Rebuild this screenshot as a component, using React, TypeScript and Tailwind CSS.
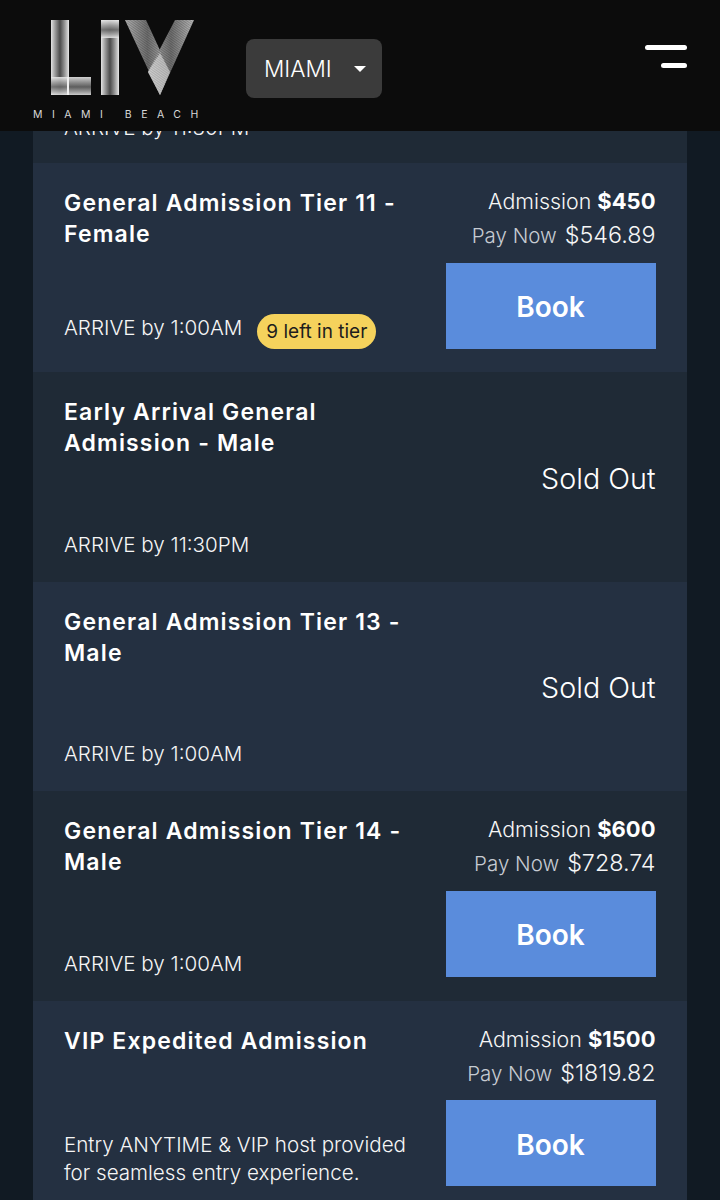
import { ReactNode } from 'react'

const font = { fontFamily: 'Inter, "Open Sans", sans-serif' }

function Logo() {
  return (
    <svg width="167" height="76" viewBox="0 0 167 76" className="block">
      <defs>
        <linearGradient id="bar" x1="0" x2="1" y1="0" y2="0">
          <stop offset="0" stopColor="#e4e4e4" />
          <stop offset="0.12" stopColor="#bdbdbd" />
          <stop offset="0.28" stopColor="#8c8c8c" />
          <stop offset="0.5" stopColor="#4c4c4c" />
          <stop offset="0.72" stopColor="#8a8a8a" />
          <stop offset="0.9" stopColor="#c4c4c4" />
          <stop offset="1" stopColor="#e8e8e8" />
        </linearGradient>
        <linearGradient id="foot" x1="0" x2="0" y1="0" y2="1">
          <stop offset="0" stopColor="#ececec" />
          <stop offset="0.3" stopColor="#a0a0a0" />
          <stop offset="0.55" stopColor="#686868" />
          <stop offset="0.8" stopColor="#a8a8a8" />
          <stop offset="1" stopColor="#e6e6e6" />
        </linearGradient>
        <linearGradient id="armL" x1="0" x2="1" y1="0" y2="0">
          <stop offset="0" stopColor="#d0d0d0" />
          <stop offset="0.5" stopColor="#808080" />
          <stop offset="1" stopColor="#dcdcdc" />
        </linearGradient>
        <pattern id="hatch" width="2" height="2" patternUnits="userSpaceOnUse" patternTransform="rotate(35)">
          <rect width="2" height="1" fill="#000" opacity="0.2" />
        </pattern>
      </defs>
      {/* L */}
      <rect x="18" y="0" width="18" height="75" fill="url(#bar)" />
      <rect x="18" y="57" width="40" height="18" fill="url(#foot)" opacity="0.88" />
      <rect x="34" y="57" width="2" height="18" fill="#f0f0f0" />
      {/* I */}
      <rect x="68" y="0" width="18" height="75" fill="url(#bar)" />
      <rect x="68" y="0" width="18" height="18" fill="url(#foot)" opacity="0.9" />
      {/* V */}
      <polygon points="92,0 113,0 137,52 127,75" fill="url(#armL)" opacity="0.85" />
      <polygon points="161,0 142,0 115,52 127,75" fill="url(#armL)" opacity="0.85" />
      <polygon points="92,0 113,0 137,52 127,75" fill="url(#hatch)" />
      <polygon points="161,0 142,0 115,52 127,75" fill="url(#hatch)" />
      <polygon points="127,33 137,52 127,75 115,52" fill="#d8d8d8" opacity="0.6" />
    </svg>
  )
}

function Header() {
  return (
    <header className="flex h-[131px] w-full shrink-0 bg-[#0c0c0c]">
      <div className="ml-[33px] mt-5 flex w-[167px] flex-col">
        <Logo />
        <div className="mt-[13px] whitespace-nowrap text-[10.5px] leading-[11px] tracking-[9.5px] text-[#d8d8d8]">
          MIAMI BEACH
        </div>
      </div>
      <div className="ml-[46px] mt-[39px] flex h-[59px] w-[136px] items-center rounded-lg bg-[#3b3b3b] pl-[18px]">
        <span className="text-[22.6px] font-light text-white">MIAMI</span>
        <span className="ml-[22px] h-0 w-0 border-x-[6.5px] border-t-[6px] border-x-transparent border-t-white" />
      </div>
      <div className="ml-auto mr-[33px] mt-[45px] flex flex-col items-end gap-[13px]">
        <span className="h-[5px] w-[42px] rounded-full bg-white" />
        <span className="h-[5px] w-[26px] rounded-full bg-white" />
      </div>
    </header>
  )
}

interface Price {
  admission: string
  payNow: string
}

interface RowProps {
  title: ReactNode
  note: ReactNode
  badge?: string
  price?: Price
  light?: boolean
}

function Row({ title, note, badge, price, light }: RowProps) {
  return (
    <div className={`flex h-[209.4px] shrink-0 justify-between pb-[23px] pl-[31px] pr-[31.5px] pt-[25px] ${light ? 'bg-[#243041]' : 'bg-[#1f2a36]'}`}>
      <div className="flex w-[355px] flex-col justify-between">
        <h3 className="text-[23px] font-semibold leading-[31px] tracking-[1.15px] text-white">{title}</h3>
        <div className="flex items-center">
          <div className="text-[20.6px] font-light leading-[28px] text-[#f6f6f6]">{note}</div>
          {badge && (
            <span className="ml-[15px] mt-[8px] rounded-full bg-[#f5d25c] px-[9px] py-[4px] text-[19px] font-normal leading-[27px] text-[#1d1d1d]">
              {badge}
            </span>
          )}
        </div>
      </div>
      {price ? (
        <div className="-mt-[2px] flex w-[210px] flex-col items-end">
          <div className="text-[21.4px] font-light leading-[30px] text-[#f6f6f6]">
            Admission <b className="text-[22px] font-bold text-white">{price.admission}</b>
          </div>
          <div className="mt-[3px] flex items-baseline text-[#f6f6f6]">
            <span className="text-[20.5px] font-light text-[#c6cbd2]">Pay Now</span>
            <span className="ml-[8px] text-[23.3px] font-light leading-[31px]">{price.payNow}</span>
          </div>
          <button className="mt-[11px] h-[86px] w-[210px] shrink-0 bg-[#5a8cdc] pt-[3px] text-[28px] font-semibold text-white">Book</button>
        </div>
      ) : (
        <div className="self-center text-[28.7px] font-light text-white">Sold Out</div>
      )}
    </div>
  )
}

export default function App() {
  return (
    <div className="flex h-[1200px] w-[720px] flex-col overflow-hidden bg-[#111a23]" style={font}>
      <Header />
      <main className="mx-[33px] flex min-h-0 flex-1 flex-col overflow-hidden">
        <div className="flex h-[32px] shrink-0 items-end overflow-hidden bg-[#1f2a36] px-[31px] pb-[28px]">
          <span className="shrink-0 whitespace-nowrap text-[20.6px] font-light leading-[14px] text-[#f6f6f6]">ARRIVE by 11:30PM</span>
        </div>
        <Row light title={<>General Admission Tier 11 -<br />Female</>} note="ARRIVE by 1:00AM" badge="9 left in tier" price={{ admission: '$450', payNow: '$546.89' }} />
        <Row title={<>Early Arrival General<br />Admission - Male</>} note="ARRIVE by 11:30PM" />
        <Row light title={<>General Admission Tier 13 -<br />Male</>} note="ARRIVE by 1:00AM" />
        <Row title={<>General Admission Tier 14 -<br />Male</>} note="ARRIVE by 1:00AM" price={{ admission: '$600', payNow: '$728.74' }} />
        <Row light title="VIP Expedited Admission" note={<>Entry ANYTIME &amp; VIP host provided<br />for seamless entry experience.</>} price={{ admission: '$1500', payNow: '$1819.82' }} />
      </main>
    </div>
  )
}
